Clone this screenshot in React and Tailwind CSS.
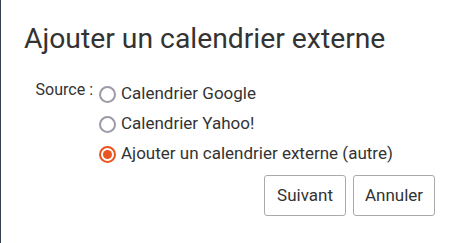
import React from "react";

function Radio({ checked, label }) {
  return (
    <label className="flex items-center h-[30px]">
      <span
        className={
          "flex items-center justify-center w-[17px] h-[17px] rounded-full border-2 " +
          (checked ? "border-[#e95420]" : "border-[#9b9aa6]")
        }
      >
        {checked && <span className="w-[9px] h-[9px] rounded-full bg-[#e95420]" />}
      </span>
      <span className="ml-[5px]">{label}</span>
    </label>
  );
}

export default function App() {
  return (
    <div
      className="w-[464px] h-[243px] bg-white border-l border-[#34404f] text-[#333] overflow-hidden"
      style={{ fontFamily: "Roboto, 'Liberation Sans', sans-serif" }}
    >
      <div className="pl-[23px] pt-[23px] text-[28.3px] leading-[32px]">
        Ajouter un calendrier externe
      </div>
      <div className="flex mt-[24px] text-[17px]">
        <div className="w-[93px] text-right pr-[1px] text-[16px] leading-[20px] pt-[1px]">Source :</div>
        <div className="flex flex-col ml-[5px]">
          <Radio label="Calendrier Google" />
          <Radio label="Calendrier Yahoo!" />
          <Radio checked label="Ajouter un calendrier externe (autre)" />
        </div>
      </div>
      <div className="flex justify-end gap-[7px] pr-[29px] mt-[6px] text-[17px]">
        <button className="w-[82px] h-[41px] border border-[#aaa] rounded-[3px] bg-white">Suivant</button>
        <button className="w-[82px] h-[41px] border border-[#aaa] rounded-[3px] bg-white">Annuler</button>
      </div>
    </div>
  );
}
